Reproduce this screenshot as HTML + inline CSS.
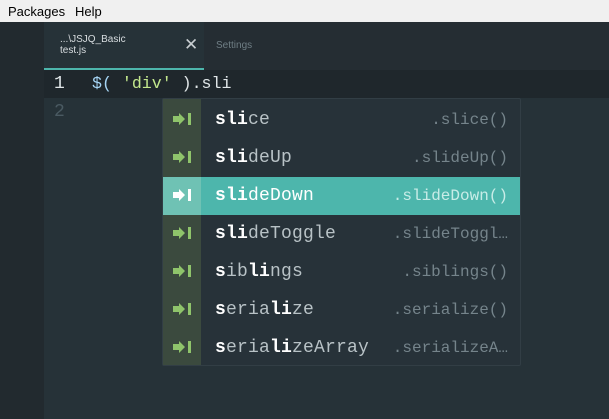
<!DOCTYPE html><html><head><style>
*{margin:0;padding:0;box-sizing:border-box}
body{width:609px;height:419px;overflow:hidden;background:#263238;font-family:"Liberation Sans",sans-serif;position:relative}
.menu{position:absolute;left:0;top:0;width:609px;height:22px;background:#f0f0f0;font-size:13px;color:#000}
.menu span{position:absolute;top:4px}
.side{position:absolute;left:0;top:22px;width:44px;height:397px;background:#222a2f}
.tabs{position:absolute;left:44px;top:22px;width:565px;height:48px;background:#252d33}
.tab1{position:absolute;left:0;top:0;width:160px;height:48px;background:#263238;border-bottom:2px solid #4db6ac}
.l1{position:absolute;left:44px;top:70px;width:565px;height:28px;background:#1f272c}
.mono{font-family:"Liberation Mono",monospace}
.pop{position:absolute;left:162px;top:98px;width:359px;height:268px;background:#273239;border:1px solid #323e45;border-radius:2px}
.ic{position:absolute;left:0;top:0;width:38px;height:266px;background:#3b4a3e}
.row{position:absolute;left:0;width:357px;height:38px}
.row.sel{background:#4db6ac}
.row .i{position:absolute;left:0;top:0;width:38px;height:38px}
.row.sel .i{background:#6fc2b4}
.row .n{position:absolute;left:52px;top:9px;font-size:18px;color:#b8c2c6;font-family:"Liberation Mono",monospace;letter-spacing:0.2px}
.row .n b{color:#fff}
.row .r{position:absolute;right:12px;top:10px;font-size:16px;color:#75848b;font-family:"Liberation Mono",monospace}
.row.sel .n{color:#fff}.row.sel .r{color:#c8ece7}
</style></head><body>
<div class="menu"><span style="left:8px">Packages</span><span style="left:75px">Help</span></div>
<div class="side"></div>
<div class="tabs"><div class="tab1">
<div style="position:absolute;left:16px;top:12px;font-size:10px;color:#d8dde0;line-height:11px">...\JSJQ_Basic<br>test.js</div>
<div style="position:absolute;left:140px;top:13px;font-size:17px;color:#c8ced1">✕</div></div>
<div style="position:absolute;left:172px;top:18px;font-size:10px;color:#6f7e85">Settings</div></div>
<div class="l1"></div>
<div class="mono" style="position:absolute;left:54px;top:74px;font-size:18px;color:#e0e6e8">1</div>
<div class="mono" style="position:absolute;left:54px;top:102px;font-size:18px;color:#4a5a62">2</div>
<div class="mono" style="position:absolute;left:92px;top:74px;font-size:16.6px;color:#e0e6e8;white-space:pre"><span style="color:#a6d5f5">$(</span> <span style="color:#c3e88d">'div'</span> ).sli</div>
<div class="pop"><div class="ic"></div>
<svg width="0" height="0" style="position:absolute"><defs><g id="a"><path d="M10 15h6v-3l6 6-6 6v-3h-6z" fill="#8fc46b"/><rect x="25" y="12" width="3" height="12" fill="#8fc46b"/></g></defs></svg>
<div class="row" style="top:2px"><svg class="i" viewBox="0 0 38 38"><use href="#a"/></svg><div class="n"><b>sli</b>ce</div><div class="r">.slice()</div></div>
<div class="row" style="top:40px"><svg class="i" viewBox="0 0 38 38"><use href="#a"/></svg><div class="n"><b>sli</b>deUp</div><div class="r">.slideUp()</div></div>
<div class="row sel" style="top:78px"><svg class="i" viewBox="0 0 38 38"><path d="M10 15h6v-3l6 6-6 6v-3h-6z" fill="#fff"/><rect x="25" y="12" width="3" height="12" fill="#fff"/></svg><div class="n"><b>sli</b>deDown</div><div class="r">.slideDown()</div></div>
<div class="row" style="top:116px"><svg class="i" viewBox="0 0 38 38"><use href="#a"/></svg><div class="n"><b>sli</b>deToggle</div><div class="r">.slideToggl…</div></div>
<div class="row" style="top:154px"><svg class="i" viewBox="0 0 38 38"><use href="#a"/></svg><div class="n"><b>s</b>ib<b>li</b>ngs</div><div class="r">.siblings()</div></div>
<div class="row" style="top:192px"><svg class="i" viewBox="0 0 38 38"><use href="#a"/></svg><div class="n"><b>s</b>eria<b>li</b>ze</div><div class="r">.serialize()</div></div>
<div class="row" style="top:230px"><svg class="i" viewBox="0 0 38 38"><use href="#a"/></svg><div class="n"><b>s</b>eria<b>li</b>zeArray</div><div class="r">.serializeA…</div></div>
</div>
</body></html>
